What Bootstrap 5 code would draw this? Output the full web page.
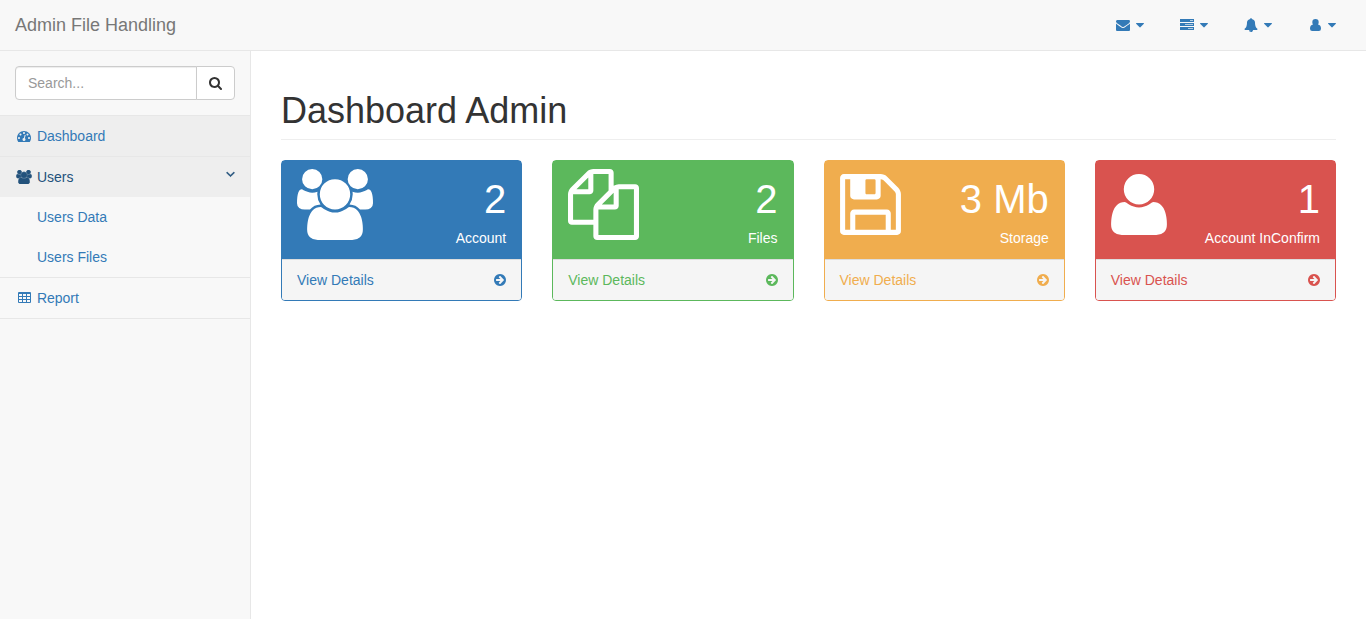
<!DOCTYPE html>
<html lang="en">
<head>
<meta charset="utf-8">
<meta name="viewport" content="width=device-width, initial-scale=1">
<title>Admin File Handling</title>
<link href="https://cdn.jsdelivr.net/npm/bootstrap@5.3.0/dist/css/bootstrap.min.css" rel="stylesheet">
<style>
  body { font-family: "Liberation Sans", Arial, sans-serif; font-size: 14px; line-height: 20px; color: #333; background: #f8f8f8; }
  a { color: #337ab7; text-decoration: none; }
  a:hover { color: #23527c; }

  /* Icons: 14px tall, sitting 2px under the baseline */
  .ico { height: 14px; fill: currentColor; vertical-align: -2px; overflow: visible; }
  .ico-fixed { width: 18px; }
  .ico-big { height: 71px; display: block; }
  .ico-bold { stroke: currentColor; stroke-width: 90; }

  /* Top bar */
  .topbar { background: #f8f8f8; border-bottom: 1px solid #e7e7e7; }
  .topbar .brand { font-size: 18px; padding: 15px; color: #777; }
  .top-menu { gap: 4px; padding-right: 15px; }
  .top-menu button { border: 0; background: none; color: #337ab7; padding: 15px; gap: 4px; }
  .top-menu button:hover { background: #eee; }

  /* Sidebar */
  .sidebar > li { border-bottom: 1px solid #e7e7e7; }
  .sidebar a { display: block; padding: 10px 15px; }
  .sidebar a.current { background: #eee; }
  .sidebar a.opened { background: #eee; color: #23527c; }
  .sidebar .sub-menu a { padding-left: 37px; }
  .search-box { padding: 15px; }
  .search-box .form-control { height: 34px; padding: 6px 12px; font-size: 14px; line-height: 20px; border-color: #ccc; border-radius: 4px; box-shadow: inset 0 1px 1px rgba(0, 0, 0, .075); }
  .search-box .form-control::placeholder { color: #999; }
  .search-box .btn { padding: 6px 12px; font-size: 14px; line-height: 20px; color: #333; background: #fff; border-color: #ccc; border-radius: 4px; }

  /* Content */
  .content { background: #fff; padding: 0 30px; }
  .page-title { font-size: 36px; line-height: 39px; font-weight: 400; margin: 40px 0 20px; padding-bottom: 9px; border-bottom: 1px solid #eee; }
  .tiles { --bs-gutter-x: 30px; --bs-gutter-y: 20px; }
  .tile { --tone: #337ab7; border: 1px solid var(--tone); border-radius: 4px; color: var(--tone); }
  .tile-green { --tone: #5cb85c; }
  .tile-yellow { --tone: #f0ad4e; }
  .tile-red { --tone: #d9534f; }
  .tile-head { background: var(--tone); color: #fff; padding: 8px 15px 11px; }
  .tile-text { padding-top: 2px; }
  .tile-number { font-size: 40px; line-height: 57px; }
  .tile-foot { background: #f5f5f5; border-top: 1px solid #ddd; padding: 10px 15px; color: var(--tone); border-radius: 0 0 3px 3px; }

  @media (min-width: 768px) {
    .side-column { width: 250px; flex: none; }
    .content { border-left: 1px solid #e7e7e7; }
  }
</style>
</head>
<body>

<svg class="d-none" aria-hidden="true">
  <symbol id="i-envelope" viewBox="0 0 1792 1792"><path d="M1792 710v794q0 66-47 113t-113 47h-1472q-66 0-113-47t-47-113v-794q44 49 101 87 362 246 497 345 57 42 92.500 65.500t94.500 48 110 24.500h2q51 0 110-24.500t94.500-48 92.500-65.500q170-123 498-345 57-39 100-87zm0-294q0 79-49 151t-122 123q-376 261-468 325-10 7-42.500 31t-54 38.500-52 32.500-57.500 27-50 9h-2q-23 0-50-9t-57.500-27-52-32.500-54-38.500-42.500-31q-91-64-262-182.500t-205-142.500q-62-42-117-115.500t-55-136.500q0-78 41.500-130t118.500-52h1472q65 0 112.500 47t47.500 113z"/></symbol>
  <symbol id="i-tasks" viewBox="0 0 14 14"><path d="M0 1h14v3h-14zM0 5h14v3h-14zM0 9h14v3h-14z"/><path fill="#f8f8f8" fill-opacity=".65" d="M10 2h3v1h-3zM5 6h8v1h-8zM8 10h5v1h-5z"/></symbol>
  <symbol id="i-bell" viewBox="0 0 1792 1792"><g transform="matrix(1 0 0 -1 0 1536)"><path d="M912 -160q0 16 -16 16q-59 0 -101.500 42.500t-42.500 101.500q0 16 -16 16t-16 -16q0 -73 51.500 -124.500t124.500 -51.500q16 0 16 16zM1728 128q0 -52 -38 -90t-90 -38h-448q0 -106 -75 -181t-181 -75t-181 75t-75 181h-448q-52 0 -90 38t-38 90q50 42 91 88t85 119.500t74.500 158.500t50 206t19.500 260q0 152 117 282.500t307 158.500q-8 19 -8 39q0 40 28 68t68 28t68 -28t28 -68q0 -20 -8 -39q190 -28 307 -158.500t117 -282.500q0 -139 19.500 -260t50 -206t74.500 -158.500t85 -119.500t91 -88z"/></g></symbol>
  <symbol id="i-person" viewBox="-2 0 14 14"><path d="M5.500 1a3.200 3.200 0 0 1 3.200 3.200q0 1.200-.7 2.200q3 .3 3 4.400q0 2.200-2.200 2.200h-6.600q-2.200 0-2.200-2.200q0-4.100 3-4.400q-.7-1-.7-2.200a3.200 3.200 0 0 1 3.200-3.200z"/></symbol>
  <symbol id="i-user" viewBox="0 0 1408 1792"><g transform="matrix(1 0 0 -1 0 1536)"><path d="M1408 131q0 -120 -73 -189.500t-194 -69.500h-874q-121 0 -194 69.500t-73 189.500q0 53 3.500 103.500t14 109t26.500 108.500t43 97.500t62 81t85.500 53.500t111.500 20q9 0 42 -21.500t74.500 -48t108 -48t133.500 -21.500t133.500 21.500t108 48t74.500 48t42 21.500q61 0 111.500 -20t85.500 -53.500t62 -81t43 -97.500t26.500 -108.500t14 -109t3.500 -103.500zM1088 1024q0 -159 -112.500 -271.500t-271.500 -112.500t-271.500 112.500t-112.500 271.500t112.500 271.500t271.500 112.500t271.500 -112.500t112.500 -271.500z"/></g></symbol>
  <symbol id="i-users" viewBox="64 0 1920 1792"><path d="M657 896q-162 5-265 128h-134q-82 0-138-40.500t-56-118.500q0-353 124-353 6 0 43.500 21t97.500 42.500 119 21.500q67 0 133-23-5 37-5 66 0 139 81 256zm1071 637q0 120-73 189.500t-194 69.500h-874q-121 0-194-69.500t-73-189.500q0-53 3.500-103.500t14-109 26.500-108.500 43-97.500 62-81 85.500-53.500 111.500-20q10 0 43 21.500t73 48 107 48 135 21.500 135-21.500 107-48 73-48 43-21.500q61 0 111.500 20t85.500 53.500 62 81 43 97.500 26.500 108.500 14 109 3.500 103.500zm-1024-1277q0 106-75 181t-181 75-181-75-75-181 75-181 181-75 181 75 75 181zm704 384q0 159-112.500 271.500t-271.500 112.500-271.500-112.500-112.500-271.500 112.500-271.500 271.500-112.500 271.500 112.500 112.500 271.500zm576 225q0 78-56 118.500t-138 40.500h-134q-103-123-265-128 81-117 81-256 0-29-5-66 66 23 133 23 59 0 119-21.500t97.500-42.500 43.500-21q124 0 124 353zm-128-609q0 106-75 181t-181 75-181-75-75-181 75-181 181-75 181 75 75 181z"/></symbol>
  <symbol id="i-files" viewBox="0 0 1792 1792"><g transform="matrix(1 0 0 -1 0 1536)"><path d="M1696 1152q40 0 68 -28t28 -68v-1216q0 -40 -28 -68t-68 -28h-960q-40 0 -68 28t-28 68v288h-544q-40 0 -68 28t-28 68v672q0 40 20 88t48 76l408 408q28 28 76 48t88 20h416q40 0 68 -28t28 -68v-328q68 40 128 40h416zM1152 939l-299 -299h299v299zM512 1323l-299 -299h299v299zM708 676l316 316v416h-384v-416q0 -40 -28 -68t-68 -28h-416v-640h512v256q0 40 20 88t48 76zM1664 -128v1152h-384v-416q0 -40 -28 -68t-68 -28h-416v-640h896z"/></g></symbol>
  <symbol id="i-floppy" viewBox="0 0 1536 1792"><g transform="matrix(1 0 0 -1 0 1536)"><path d="M384 0h768v384h-768v-384zM1280 0h128v896q0 14 -10 38.500t-20 34.500l-281 281q-10 10 -34 20t-39 10v-416q0 -40 -28 -68t-68 -28h-576q-40 0 -68 28t-28 68v416h-128v-1280h128v416q0 40 28 68t68 28h832q40 0 68 -28t28 -68v-416zM896 928v320q0 13 -9.500 22.500t-22.500 9.500h-192q-13 0 -22.500 -9.500t-9.500 -22.500v-320q0 -13 9.500 -22.500t22.500 -9.500h192q13 0 22.500 9.500t9.500 22.500zM1536 896v-928q0 -40 -28 -68t-68 -28h-1344q-40 0 -68 28t-28 68v1344q0 40 28 68t68 28h928q40 0 88 -20t76 -48l280 -280q28 -28 48 -76t20 -88z"/></g></symbol>
  <symbol id="i-arrow" viewBox="0 0 1536 1792"><g transform="matrix(1 0 0 -1 0 1536)"><path d="M1285 640q0 27 -18 45l-91 91l-362 362q-18 18 -45 18t-45 -18l-91 -91q-18 -18 -18 -45t18 -45l189 -189h-502q-26 0 -45 -19t-19 -45v-128q0 -26 19 -45t45 -19h502l-189 -189q-19 -19 -19 -45t19 -45l91 -91q18 -18 45 -18t45 18l362 362l91 91q18 18 18 45zM1536 640q0 -209 -103 -385.500t-279.500 -279.500t-385.500 -103t-385.500 103t-279.500 279.500t-103 385.500t103 385.500t279.500 279.500t385.500 103t385.500 -103t279.500 -279.500t103 -385.500z"/></g></symbol>
  <symbol id="i-search" viewBox="0 0 1664 1792"><g transform="matrix(1 0 0 -1 0 1536)"><path d="M1152 704q0 185 -131.500 316.500t-316.500 131.500t-316.500 -131.500t-131.500 -316.500t131.500 -316.500t316.500 -131.500t316.500 131.500t131.500 316.500zM1664 -128q0 -52 -38 -90t-90 -38q-54 0 -90 38l-343 342q-179 -124 -399 -124q-143 0 -273.500 55.500t-225 150t-150 225t-55.500 273.500t55.500 273.500t150 225t225 150t273.500 55.500t273.500 -55.500t225 -150t150 -225t55.500 -273.500q0 -220 -124 -399l343 -343q37 -37 37 -90z"/></g></symbol>
  <symbol id="i-gauge" viewBox="0 0 1792 1792"><g transform="matrix(1 0 0 -1 0 1536)"><path d="M384 384q0 53 -37.500 90.500t-90.500 37.500t-90.500 -37.500t-37.500 -90.500t37.500 -90.500t90.500 -37.500t90.500 37.500t37.500 90.500zM576 832q0 53 -37.500 90.500t-90.500 37.500t-90.500 -37.500t-37.500 -90.500t37.500 -90.500t90.500 -37.500t90.500 37.500t37.500 90.500zM1004 351l101 382q6 26 -7.500 48.500t-38.500 29.500t-48 -6.500t-30 -39.500l-101 -382q-60 -5 -107 -43.500t-63 -98.500q-20 -77 20 -146t117 -89t146 20t89 117q16 60 -6 117t-72 91zM1664 384q0 53 -37.500 90.500t-90.500 37.500t-90.500 -37.500t-37.500 -90.500t37.500 -90.500t90.500 -37.500t90.500 37.500t37.500 90.500zM1024 1024q0 53 -37.500 90.500t-90.500 37.500t-90.500 -37.500t-37.500 -90.500t37.500 -90.500t90.500 -37.500t90.500 37.500t37.500 90.500zM1472 832q0 53 -37.500 90.500t-90.500 37.500t-90.500 -37.500t-37.500 -90.500t37.500 -90.500t90.500 -37.500t90.500 37.500t37.500 90.500zM1792 384q0 -261 -141 -483q-19 -29 -54 -29h-1402q-35 0 -54 29q-141 221 -141 483q0 182 71 348t191 286t286 191t348 71t348 -71t286 -191t191 -286t71 -348z"/></g></symbol>
  <symbol id="i-table" viewBox="-1 0 14 14"><path fill-rule="evenodd" d="M1 1h11q1 0 1 1v9q0 1-1 1h-11q-1 0-1-1v-9q0-1 1-1zM1 3v2h3v-2zM5 3v2h3v-2zM9 3v2h3v-2zM1 6v2h3v-2zM5 6v2h3v-2zM9 6v2h3v-2zM1 9v2h3v-2zM5 9v2h3v-2zM9 9v2h3v-2z"/></symbol>
  <symbol id="i-caret" viewBox="0 0 1024 1792"><path d="M1024 704q0 26-19 45l-448 448q-19 19-45 19t-45-19l-448-448q-19-19-19-45t19-45 45-19h896q26 0 45 19t19 45z"/></symbol>
  <symbol id="i-angle" viewBox="0 0 1152 1792"><g transform="matrix(1 0 0 -1 0 1536)"><path d="M1075 800q0 -13 -10 -23l-466 -466q-10 -10 -23 -10t-23 10l-466 466q-10 10 -10 23t10 23l50 50q10 10 23 10t23 -10l393 -393l393 393q10 10 23 10t23 -10l50 -50q10 -10 10 -23z"/></g></symbol>
</svg>

<div class="d-flex flex-column min-vh-100">
  <header class="topbar d-flex flex-wrap justify-content-between">
    <a class="brand" href="#">Admin File Handling</a>
    <nav class="top-menu d-flex" aria-label="Account">
      <button type="button" class="d-flex align-items-center" aria-label="Messages"><svg class="ico ico-fixed"><use href="#i-envelope"/></svg><svg class="ico" width="8"><use href="#i-caret"/></svg></button>
      <button type="button" class="d-flex align-items-center" aria-label="Tasks"><svg class="ico ico-fixed"><use href="#i-tasks"/></svg><svg class="ico" width="8"><use href="#i-caret"/></svg></button>
      <button type="button" class="d-flex align-items-center" aria-label="Alerts"><svg class="ico ico-fixed"><use href="#i-bell"/></svg><svg class="ico" width="8"><use href="#i-caret"/></svg></button>
      <button type="button" class="d-flex align-items-center" aria-label="User"><svg class="ico ico-fixed"><use href="#i-person"/></svg><svg class="ico" width="8"><use href="#i-caret"/></svg></button>
    </nav>
  </header>

  <div class="d-flex flex-column flex-md-row flex-grow-1">
    <nav class="side-column" aria-label="Main">
      <ul class="sidebar list-unstyled mb-0">
        <li class="search-box">
          <form class="input-group">
            <input type="text" class="form-control" placeholder="Search..." aria-label="Search">
            <button type="button" class="btn" aria-label="Go"><svg class="ico" width="13"><use href="#i-search"/></svg></button>
          </form>
        </li>
        <li><a class="current" href="#"><svg class="ico ico-fixed"><use href="#i-gauge"/></svg> Dashboard</a></li>
        <li>
          <a class="opened" href="#"><svg class="ico ico-bold float-end" width="9"><use href="#i-angle"/></svg><svg class="ico ico-fixed ico-bold"><use href="#i-users"/></svg> Users</a>
          <ul class="sub-menu list-unstyled">
            <li><a href="#">Users Data</a></li>
            <li><a href="#">Users Files</a></li>
          </ul>
        </li>
        <li><a href="#"><svg class="ico ico-fixed"><use href="#i-table"/></svg> Report</a></li>
      </ul>
    </nav>

    <main class="content flex-grow-1">
      <h1 class="page-title">Dashboard Admin</h1>
      <div class="row tiles">
        <div class="col-md-6 col-lg-3">
          <section class="tile">
            <div class="tile-head d-flex justify-content-between align-items-start">
              <svg class="ico ico-big" width="76"><use href="#i-users"/></svg>
              <div class="tile-text text-end"><div class="tile-number">2</div><div>Account</div></div>
            </div>
            <a class="tile-foot d-flex justify-content-between align-items-center" href="#">View Details <svg class="ico" width="12"><use href="#i-arrow"/></svg></a>
          </section>
        </div>
        <div class="col-md-6 col-lg-3">
          <section class="tile tile-green">
            <div class="tile-head d-flex justify-content-between align-items-start">
              <svg class="ico ico-big" width="71"><use href="#i-files"/></svg>
              <div class="tile-text text-end"><div class="tile-number">2</div><div>Files</div></div>
            </div>
            <a class="tile-foot d-flex justify-content-between align-items-center" href="#">View Details <svg class="ico" width="12"><use href="#i-arrow"/></svg></a>
          </section>
        </div>
        <div class="col-md-6 col-lg-3">
          <section class="tile tile-yellow">
            <div class="tile-head d-flex justify-content-between align-items-start">
              <svg class="ico ico-big" width="61"><use href="#i-floppy"/></svg>
              <div class="tile-text text-end"><div class="tile-number">3 Mb</div><div>Storage</div></div>
            </div>
            <a class="tile-foot d-flex justify-content-between align-items-center" href="#">View Details <svg class="ico" width="12"><use href="#i-arrow"/></svg></a>
          </section>
        </div>
        <div class="col-md-6 col-lg-3">
          <section class="tile tile-red">
            <div class="tile-head d-flex justify-content-between align-items-start">
              <svg class="ico ico-big" width="56"><use href="#i-user"/></svg>
              <div class="tile-text text-end"><div class="tile-number">1</div><div>Account InConfirm</div></div>
            </div>
            <a class="tile-foot d-flex justify-content-between align-items-center" href="#">View Details <svg class="ico" width="12"><use href="#i-arrow"/></svg></a>
          </section>
        </div>
      </div>
    </main>
  </div>
</div>

<script src="https://cdn.jsdelivr.net/npm/bootstrap@5.3.0/dist/js/bootstrap.bundle.min.js"></script>
</body>
</html>
